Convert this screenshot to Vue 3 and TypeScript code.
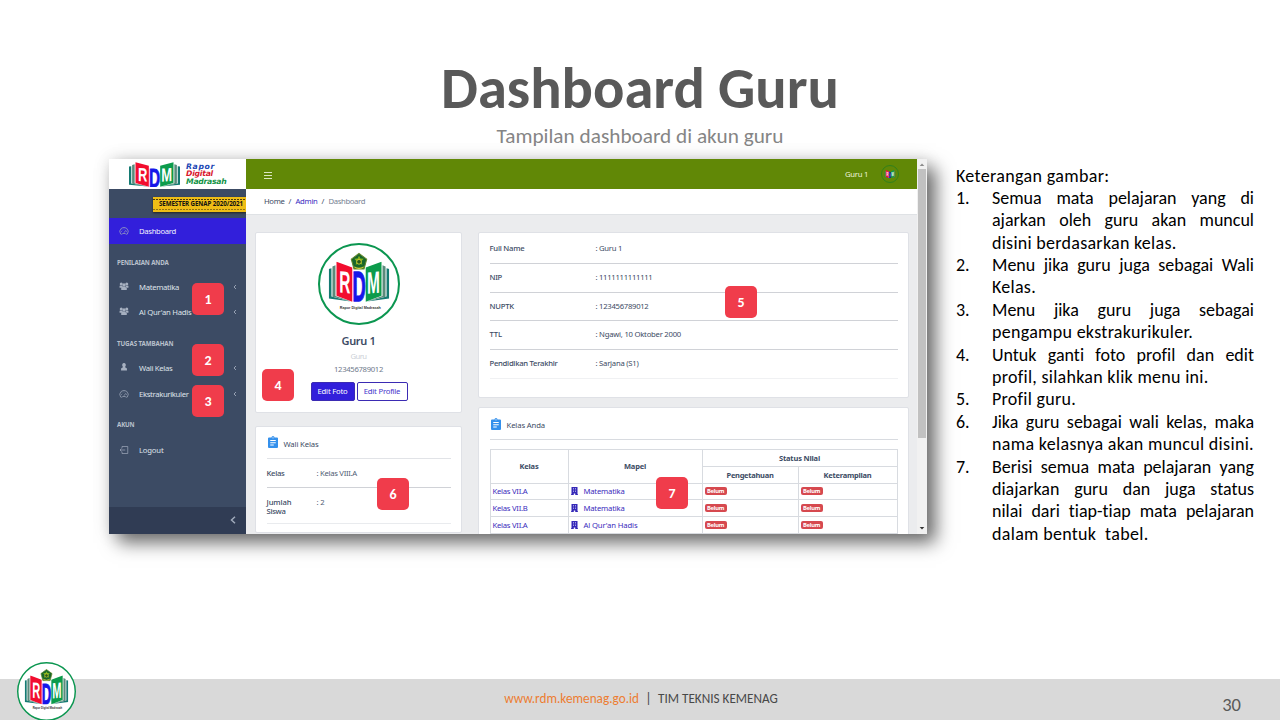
<script setup lang="ts">
import type { Directive } from 'vue'

// Makes a label occupy a given width, by letter spacing or, with .size, by font size.
const vFit: Directive<HTMLElement, number> = {
  mounted(el, binding) {
    const count = (el.textContent ?? '').trim().length
    const natural = el.getBoundingClientRect().width
    if (binding.modifiers.size) {
      el.style.fontSize = `${(parseFloat(getComputedStyle(el).fontSize) * binding.value) / natural}px`
    } else if (count > 1) {
      el.style.letterSpacing = `${(binding.value - natural) / count}px`
    }
  },
}

interface MenuItem { icon: string; label: string; width: number; arrow: boolean }
interface MenuGroup { title: string; width: number; items: MenuItem[] }

const menu: MenuGroup[] = [
  {
    title: 'PENILAIAN ANDA', width: 51.5,
    items: [
      { icon: 'users', label: 'Matematika', width: 40, arrow: true },
      { icon: 'users', label: "Al Qur'an Hadis", width: 52.5, arrow: true },
    ],
  },
  {
    title: 'TUGAS TAMBAHAN', width: 56.5,
    items: [
      { icon: 'user', label: 'Wali Kelas', width: 33.5, arrow: true },
      { icon: 'gauge', label: 'Ekstrakurikuler', width: 49.5, arrow: true },
    ],
  },
  { title: 'AKUN', width: 17.5, items: [{ icon: 'logout', label: 'Logout', width: 24.5, arrow: false }] },
]

const profile = [
  { label: 'Full Name', lw: 35, value: ': Guru 1', vw: 26.5 },
  { label: 'NIP', lw: 12.5, value: ': 1111111111111', vw: 57 },
  { label: 'NUPTK', lw: 24.5, value: ': 123456789012', vw: 53 },
  { label: 'TTL', lw: 12.5, value: ': Ngawi, 10 Oktober 2000', vw: 85.5 },
  { label: 'Pendidikan Terakhir', lw: 68, value: ': Sarjana (S1)', vw: 43 },
]

const classes = [
  { kelas: 'Kelas VII.A', mapel: 'Matematika', width: 41 },
  { kelas: 'Kelas VII.B', mapel: 'Matematika', width: 41 },
  { kelas: 'Kelas VII.A', mapel: "Al Qur'an Hadis", width: 54 },
]

const notes: { text: string; last?: number }[][] = [
  [{ text: 'Semua mata pelajaran yang di' }, { text: 'ajarkan oleh guru akan muncul' }, { text: 'disini berdasarkan kelas.', last: 184.5 }],
  [{ text: 'Menu jika guru juga sebagai Wali' }, { text: 'Kelas.', last: 44 }],
  [{ text: 'Menu jika guru juga sebagai' }, { text: 'pengampu ekstrakurikuler.', last: 201 }],
  [{ text: 'Untuk ganti foto profil dan edit' }, { text: 'profil, silahkan klik menu ini.', last: 216.5 }],
  [{ text: 'Profil guru.', last: 84 }],
  [{ text: 'Jika guru sebagai wali kelas, maka' }, { text: 'nama kelasnya akan muncul disini.', last: 262 }],
  [
    { text: 'Berisi semua mata pelajaran yang' }, { text: 'diajarkan guru dan juga status' },
    { text: 'nilai dari tiap-tiap mata pelajaran' }, { text: 'dalam bentuk\u00a0 tabel.', last: 156.5 },
  ],
]
</script>

<template>
  <svg class="defs" width="0" height="0" aria-hidden="true">
    <symbol id="book" viewBox="32 55 180 121" preserveAspectRatio="none">
      <path d="M32 77l8-2v84l58 15-66-9z" fill="#147a72" />
      <path d="M43 70l9-4v92l46 15-55-13z" fill="#5a8b7c" />
      <path d="M212 77l-8-2v84l-58 15 66-9z" fill="#147a72" />
      <path d="M201 70l-9-4v92l-46 15 55-13z" fill="#5a8b7c" />
      <path d="M55 56l47 17v102l-47-18z" fill="#f20d2e" />
      <path d="M189 56l-47 17v102l47-18z" fill="#0c9b4c" />
      <text class="mark" font-size="92" fill="#fff" transform="translate(80 149) skewY(5) scale(.5 1)">R</text>
      <text class="mark" font-size="124" fill="#1616e8" stroke="#1616e8" stroke-width="4" transform="translate(122 174) scale(.44 1)">D</text>
      <text class="mark" font-size="92" fill="#fff" transform="translate(165 149) skewY(-5) scale(.5 1)">M</text>
    </symbol>
    <symbol id="seal" viewBox="0 0 244 244">
      <circle cx="122" cy="122" r="119" fill="#fff" stroke="#0b9650" stroke-width="6" />
      <path d="M122 31l23 17-8 29h-30l-8-29z" fill="#17662b" stroke="#65892a" stroke-width="3" />
      <path d="M122 38l4 8 10 1-7 7 3 11-10-5-10 5 3-11-7-7 10-1z" fill="#83b51a" />
      <circle cx="122" cy="56" r="7" fill="#245a18" stroke="#dccf37" stroke-width="2.5" />
      <path d="M108 71q14 9 28 0" fill="none" stroke="#dccf37" stroke-width="3" />
      <use href="#book" x="32" y="55" width="180" height="121" />
      <text x="126" y="195" class="caption" font-size="11" textLength="122" lengthAdjust="spacingAndGlyphs">Rapor Digital Madrasah</text>
    </symbol>
    <symbol id="users" viewBox="0 0 18 14">
      <g fill="#a6b0c0"><circle cx="4" cy="3.2" r="2.7" /><circle cx="14" cy="3.2" r="2.7" /><circle cx="9" cy="5" r="3" /><path d="M1 6.500h4.500L7 8.200 5 10H1zM17 6.500h-4.500L11 8.200l2 1.800h4zM4 14v-3.500L6 8h6l2 2.500V14z" /></g>
    </symbol>
    <symbol id="user" viewBox="0 0 18 14">
      <path d="M9 0a3.300 3.300 0 0 1 2.500 5.500L11 7.500l3.300 2v4H3.700v-4L7 7.500 6.500 5.500A3.300 3.300 0 0 1 9 0z" fill="#a6b0c0" />
    </symbol>
    <symbol id="gauge" viewBox="0 0 18 14">
      <path d="M3 12.500a7.500 7.500 0 1 1 12 0q-1.500 1-3-.5-3-1.500-6 0-1.500 1.500-3 .5zM9 10l3.500-4.500M9 2.500V4M3.500 8H5m8 0h1.500M5 4.300l1 1" fill="none" stroke="currentColor" stroke-width="1.300" />
    </symbol>
    <symbol id="logout" viewBox="0 0 18 16">
      <path d="M5 4.500V1h11.500v14H5v-3.500M11.500 8H1m3-3L1 8l3 3" fill="none" stroke="currentColor" stroke-width="1.400" />
    </symbol>
    <symbol id="clip" viewBox="0 0 20 24">
      <path d="M2 3h5a3 3 0 0 1 6 0h5q2 0 2 2v17q0 2-2 2H2q-2 0-2-2V5q0-2 2-2z" fill="#3490ec" />
      <circle cx="10" cy="3.600" r="1.200" fill="#fff" /><path d="M4.500 9h11M4.500 13.500h11M4.500 18h7" stroke="#fff" stroke-width="2" />
    </symbol>
    <symbol id="building" viewBox="0 0 14 16">
      <path d="M1 0h12v14.500h1V16H8.500v-3h-3v3H0v-1.500h1z" fill="#3528b8" />
      <path d="M4 3h2m2 0h2M4 6h2m2 0h2M4 9h2m2 0h2" stroke="#c5c1f0" stroke-width="1.500" />
    </symbol>
  </svg>

  <div class="slide">
    <header class="heading">
      <h1><span v-fit.size="398" class="fit">Dashboard Guru</span></h1>
      <p><span v-fit.size="287" class="fit">Tampilan dashboard di akun guru</span></p>
    </header>

    <main class="content">
      <section class="frame">
        <div class="window">
          <aside class="sidebar">
            <div class="brand">
              <svg class="brand-book"><use href="#book" width="51" height="25" /></svg>
              <div class="brand-name">
                <span v-fit="29" class="fit blue">Rapor</span>
                <span v-fit="27" class="fit red">Digital</span>
                <span v-fit="40.500" class="fit green">Madrasah</span>
              </div>
            </div>
            <div class="term"><div class="ribbon"><span v-fit="84" class="fit">SEMESTER GENAP 2020/2021</span></div></div>
            <div class="item active">
              <svg class="icon"><use href="#gauge" width="10" height="8" /></svg>
              <span v-fit="37" class="fit">Dashboard</span>
            </div>
            <template v-for="group in menu" :key="group.title">
              <div class="group"><span v-fit="group.width" class="fit">{{ group.title }}</span></div>
              <div v-for="item in group.items" :key="item.label" class="item">
                <svg class="icon" :class="'icon-' + item.icon"><use :href="'#' + item.icon" width="10" height="8" /></svg>
                <span v-fit="item.width" class="fit">{{ item.label }}</span>
                <svg v-if="item.arrow" class="arrow" viewBox="0 0 4 6"><path d="M3 1L1 3l2 2" /></svg>
              </div>
            </template>
            <div class="collapse"><svg viewBox="0 0 6 8"><path d="M5 .7L1.500 4 5 7.300" /></svg></div>
          </aside>

          <div class="page">
            <div class="topbar">
              <svg class="burger" viewBox="0 0 8 8"><path d="M0 1.500h8M0 4.500h8M0 7.500h8" /></svg>
              <div class="account">
                <span v-fit="23" class="fit">Guru 1</span>
                <svg class="avatar"><circle cx="9" cy="9" r="8.500" fill="none" stroke="#32801b" /><use href="#book" x="3.500" y="5" width="11" height="8" /></svg>
              </div>
            </div>
            <div class="crumbs">
              <span v-fit="20.500" class="fit">Home</span><i>/</i><a v-fit="22" class="fit">Admin</a><i>/</i><span v-fit="36.500" class="fit muted">Dashboard</span>
            </div>
            <div class="columns">
              <div class="left">
                <div class="card user">
                  <svg class="seal" viewBox="0 0 244 244"><use href="#seal" width="244" height="244" /></svg>
                  <strong><span v-fit="34" class="fit">Guru 1</span></strong>
                  <small><span v-fit="16" class="fit">Guru</span></small>
                  <div class="code"><span v-fit="49" class="fit">123456789012</span></div>
                  <div class="buttons">
                    <button class="solid"><span v-fit="30" class="fit">Edit Foto</span></button>
                    <button><span v-fit="36.500" class="fit">Edit Profile</span></button>
                  </div>
                </div>
                <div class="card homeroom">
                  <div class="card-title"><svg><use href="#clip" width="10" height="12" /></svg><span v-fit="35" class="fit">Wali Kelas</span></div>
                  <dl class="first"><dt><span v-fit="18" class="fit">Kelas</span></dt><dd><span v-fit="40.500" class="fit">: Kelas VIII.A</span></dd></dl>
                  <dl class="second"><dt><span v-fit="25" class="fit">Jumlah</span><br /><span v-fit="19" class="fit">Siswa</span></dt><dd><span v-fit="8" class="fit">: 2</span></dd></dl>
                </div>
              </div>
              <div class="right">
                <div class="card profile">
                  <dl v-for="row in profile" :key="row.label">
                    <dt><span v-fit="row.lw" class="fit">{{ row.label }}</span></dt>
                    <dd><span v-fit="row.vw" class="fit">{{ row.value }}</span></dd>
                  </dl>
                </div>
                <div class="card classes">
                  <div class="card-title"><svg><use href="#clip" width="10" height="12" /></svg><span v-fit="38.500" class="fit">Kelas Anda</span></div>
                  <div class="table">
                    <div class="th tall"><span v-fit="19" class="fit">Kelas</span></div>
                    <div class="th tall"><span v-fit="22" class="fit">Mapel</span></div>
                    <div class="th wide"><span v-fit="41" class="fit">Status Nilai</span></div>
                    <div class="th"><span v-fit="47" class="fit">Pengetahuan</span></div>
                    <div class="th"><span v-fit="48" class="fit">Keterampilan</span></div>
                    <template v-for="(row, i) in classes" :key="i">
                      <div class="td"><span v-fit="35" class="fit">{{ row.kelas }}</span></div>
                      <div class="td subject"><svg><use href="#building" width="7" height="8" /></svg><span v-fit="row.width" class="fit">{{ row.mapel }}</span></div>
                      <div class="td"><b><span v-fit="17" class="fit">Belum</span></b></div>
                      <div class="td"><b><span v-fit="17" class="fit">Belum</span></b></div>
                    </template>
                  </div>
                </div>
              </div>
            </div>
          </div>

          <div class="scroll">
            <svg viewBox="0 0 10 8"><path d="M2.700 6L5 3.500 7.300 6z" fill="#8b8b8b" /></svg>
            <div class="thumb"></div>
            <svg viewBox="0 0 10 8"><path d="M2.700 2L5 4.500 7.300 2z" fill="#333" /></svg>
          </div>
        </div>
        <span v-for="n in 7" :key="n" class="pin" :class="'pin-' + n">{{ n }}</span>
      </section>

      <section class="notes">
        <p><span v-fit="153.500" class="fit">Keterangan gambar:</span></p>
        <div v-for="(note, i) in notes" :key="i" class="note">
          <span class="number">{{ i + 1 }}.</span>
          <div class="lines">
            <template v-for="line in note" :key="line.text">
              <p v-if="line.last"><span v-fit="line.last" class="fit">{{ line.text }}</span></p>
              <p v-else class="justified">{{ line.text }}</p>
            </template>
          </div>
        </div>
      </section>
    </main>

    <footer class="footer">
      <svg class="footer-seal" viewBox="0 0 244 244"><use href="#seal" width="244" height="244" /></svg>
      <div class="credit"><span v-fit.size="135" class="fit site">www.rdm.kemenag.go.id</span><i>|</i><span v-fit.size="120" class="fit">TIM TEKNIS KEMENAG</span></div>
      <span class="page-number">30</span>
    </footer>
  </div>
</template>

<style scoped>
* { box-sizing: border-box; }
h1, p, dl, dd { margin: 0; }
i { font-style: normal; }
.defs { position: absolute; }
.mark { font-family: "Liberation Sans", sans-serif; font-weight: 700; text-anchor: middle; }
.caption { font-family: "Liberation Sans", sans-serif; font-weight: 700; text-anchor: middle; fill: #333; }
.fit { display: inline-block; white-space: nowrap; }
.slide { width: 1280px; height: 720px; display: flex; flex-direction: column; background: #fff; font-family: Carlito, Lato, sans-serif; font-variant-ligatures: none; overflow: hidden; }
.heading { height: 159px; padding-top: 57px; text-align: center; flex: none; }
h1 { height: 62px; font-size: 56px; line-height: 62px; font-weight: 700; color: #595959; }
.heading p { height: 26px; margin-top: 4px; font-size: 21px; line-height: 26px; color: #858585; }
.content { display: flex; flex: 1; padding-left: 109px; align-items: flex-start; }
.frame { position: relative; width: 818px; height: 375px; flex: none; box-shadow: 9px 9px 17px rgba(0, 0, 0, .55), 0 0 16px rgba(0, 0, 0, .13); }
.window { display: flex; width: 818px; height: 375px; overflow: hidden; font-family: "Noto Sans", "Open Sans", sans-serif; font-size: 7.700px; color: #3c4b64; background: #ebecee; }

.sidebar { width: 137px; display: flex; flex-direction: column; background: #3c4b64; color: #dfe3ea; flex: none; }
.brand { height: 30px; display: flex; align-items: center; padding-left: 20px; background: #fff; }
.brand-book { width: 51px; height: 25px; }
.brand-name { display: flex; flex-direction: column; align-items: flex-start; margin-left: 6px; font: italic 700 7.700px/7.500px "DejaVu Sans", sans-serif; }
.blue { color: #2046b4; }
.red { color: #d9162d; }
.green { color: #129347; }
.term { height: 29px; display: flex; justify-content: flex-end; padding-top: 8px; }
.ribbon { width: 93px; height: 15px; padding: 1px 3px 0 6px; background: #efbd16; color: #111; font-size: 6.200px; line-height: 12px; font-weight: 700; box-shadow: 0 1px 2px #222; background-image: repeating-linear-gradient(90deg, #4c3d0b 0 2px, transparent 2px 3px), repeating-linear-gradient(90deg, #8f7212 0 2px, transparent 2px 3px); background-size: 100% 1px; background-position: 0 2px, 0 12px; background-repeat: no-repeat; }
.item { height: 25.200px; display: flex; align-items: center; padding: 0 8px 0 10px; flex: none; }
.item.active { height: 25.500px; background: #321fdb; color: #f2f1fc; }
.icon { width: 10px; height: 8px; margin-right: 10px; color: #a0aabc; }
.icon-users, .icon-user { margin-top: -3px; }
.arrow { width: 4px; height: 6px; margin-right: 1px; margin-left: auto; }
.arrow path, .collapse path { fill: none; stroke: #a0aabb; stroke-width: .9; }
.group { height: 31px; padding: 7px 0 0 8px; line-height: 24px; font-size: 6.200px; font-weight: 700; color: #b9c0cc; flex: none; }
.collapse { height: 27.500px; display: flex; align-items: center; justify-content: flex-end; margin-top: auto; padding-right: 10px; background: #303c54; }
.collapse svg { width: 6px; height: 8px; }
.collapse path { stroke-width: 1.500; }

.page { width: 671px; flex: none; }
.topbar { height: 30px; display: flex; align-items: center; justify-content: space-between; padding: 0 18px; background: #618806; color: #eef4dc; }
.burger { width: 8px; height: 8px; margin-top: 2px; }
.burger path { stroke: #dce7c2; stroke-width: 1; }
.account { display: flex; align-items: center; gap: 13px; }
.avatar { width: 18px; height: 18px; }
.crumbs { height: 26px; display: flex; align-items: center; padding: 0 0 2px 18px; background: #fff; border-bottom: 1px solid #dfe2e5; }
.crumbs i { width: 11px; text-align: center; }
.crumbs a { color: #3a2bbf; }
.crumbs .muted { color: #768192; }
.columns { display: flex; gap: 16px; padding: 17px 0 0 9px; align-items: flex-start; }
.left { width: 207px; }
.right { width: 431px; }
.card { background: #fff; border: 1px solid #dfe1e6; border-radius: 2px; padding: 0 10.500px; }
.card.user { height: 180.500px; display: flex; flex-direction: column; align-items: center; padding-top: 10px; }
.seal { width: 82px; height: 82px; flex: none; }
.card.user strong { margin-top: 7px; font-size: 11px; line-height: 17px; font-weight: 600; }
.card.user small { font-size: 7.700px; line-height: 14px; color: #ccd0d6; }
.code { line-height: 12px; color: #6f7a8b; }
.buttons { display: flex; gap: 2px; margin-top: 7px; padding-left: 1px; }
button { height: 19px; width: 51px; padding: 0 0 1px; display: flex; align-items: center; justify-content: center; font: inherit; background: #fff; color: #4535cc; border: 1px solid #3b2bb3; border-radius: 2px; }
button.solid { width: 44px; background: #321fdb; color: #fff; }
.homeroom { height: 107px; margin-top: 13px; }
.card-title { display: flex; align-items: center; gap: 6px; height: 32.500px; padding: 3px 0 0 1px; border-bottom: 1px solid #e1e3e7; }
.card-title svg { width: 10px; height: 12px; margin-top: -3px; }
dl { display: flex; border-bottom: 1px solid #d0d2d7; }
dt { font-weight: 500; }
.first { height: 29px; line-height: 28px; }
.second { height: 36px; padding-top: 10px; line-height: 9px; border-color: #e9ebee; }
.homeroom dt { width: 50px; }
.homeroom dd { color: #4f5d73; }
.profile { height: 165.500px; padding-top: 2px; }
.profile dl { height: 28.800px; line-height: 27px; }
.profile dl:last-child { border-color: #f0f1f3; }
.profile dt { width: 106px; }
.classes { height: 150px; margin-top: 9.500px; }
.classes .card-title { padding-top: 3px; height: 32px; border-color: #d8dbe0; }
.table { display: grid; grid-template-columns: 78px 134px 96px 1fr; grid-template-rows: 17px 16.500px repeat(3, 16.900px); margin-top: 9px; border-top: 1px solid #d8dbe0; border-left: 1px solid #d8dbe0; }
.th, .td { display: flex; align-items: center; border-right: 1px solid #d8dbe0; border-bottom: 1px solid #d8dbe0; }
.th { justify-content: center; font-weight: 700; font-size: 7.500px; }
.tall { grid-row: span 2; }
.wide { grid-column: span 2; }
.td { padding-left: 2px; color: #3a2cbc; }
.subject { gap: 6px; }
.subject svg { width: 7px; height: 8px; }
.td b { width: 22px; height: 8px; display: flex; align-items: center; justify-content: center; color: #fff; background: #d6494f; border-radius: 2px; font-size: 5.800px; line-height: 8px; }

.scroll { width: 10px; display: flex; flex-direction: column; background: #f1f1f1; flex: none; }
.scroll svg { width: 10px; height: 10px; }
.thumb { width: 8px; height: 269px; margin: 0 1px auto; background: #c1c1c1; }
.pin { position: absolute; width: 32px; height: 32px; border-radius: 5px; background: #f03c4b; color: #fff; text-align: center; font-size: 14px; font-weight: 700; line-height: 34px; }
.pin-1 { left: 83px; top: 124px; }
.pin-2 { left: 83px; top: 185px; }
.pin-3 { left: 83px; top: 226px; }
.pin-4 { left: 153px; top: 210px; }
.pin-5 { left: 616px; top: 127px; }
.pin-6 { left: 268px; top: 319px; }
.pin-7 { left: 547px; top: 318px; }

.notes { width: 298px; margin-left: 29px; padding-top: 5.500px; font-size: 18px; line-height: 22.400px; color: #000; }
.notes p { height: 22.400px; white-space: nowrap; }
.note { display: flex; }
.number { width: 36px; flex: none; }
.lines { width: 262px; }
.justified { text-align: justify; text-align-last: justify; }

.footer { position: relative; height: 41px; flex: none; background: #d9d9d9; display: flex; justify-content: center; font-size: 14px; color: #484848; }
.footer-seal { position: absolute; left: 16.500px; top: -17.500px; width: 59px; height: 59px; }
.credit { display: flex; margin-left: 2px; line-height: 40px; }
.credit i { width: 19px; text-align: center; }
.site { color: #ed7d31; }
.page-number { position: absolute; right: 39px; top: 14px; font-size: 18.500px; line-height: 24px; color: #595959; }
</style>
